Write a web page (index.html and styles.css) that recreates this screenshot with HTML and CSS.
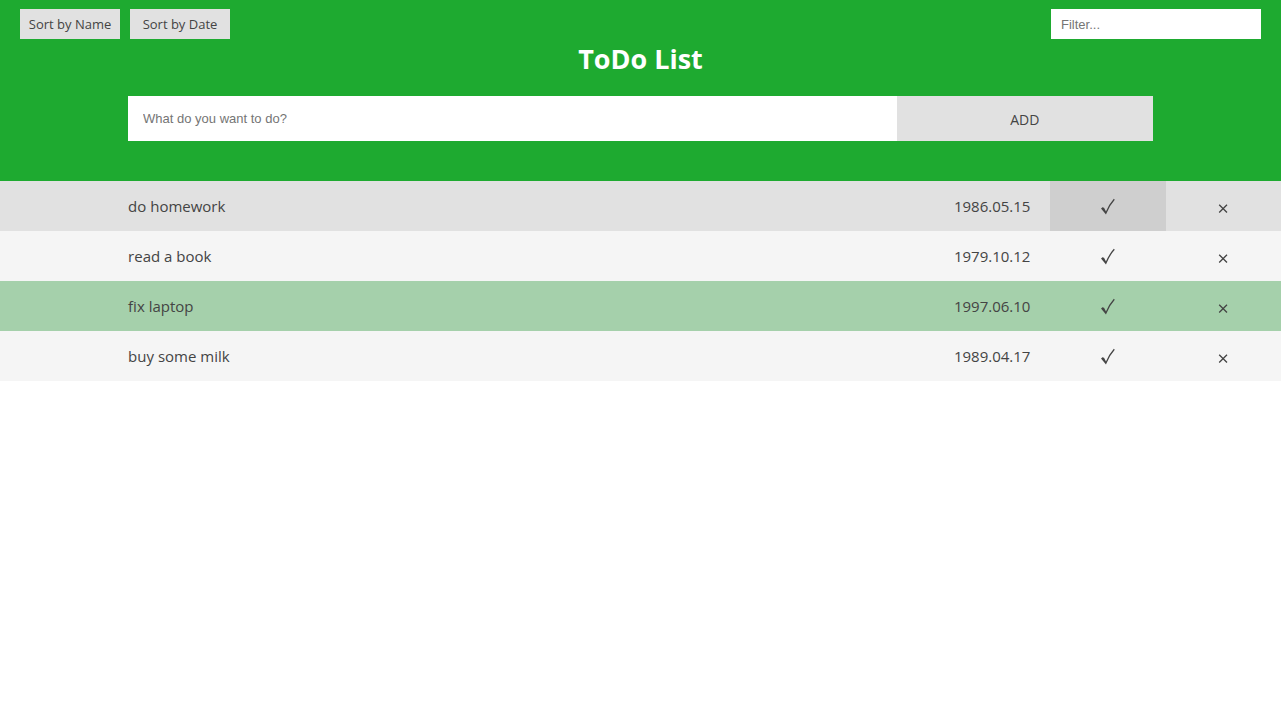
FILE: index.html
```html
<!DOCTYPE html>
<html lang="en">
<head>
<meta charset="utf-8">
<meta name="viewport" content="width=device-width, initial-scale=1">
<title>ToDo List</title>
<link rel="stylesheet" href="styles.css">
</head>
<body>
<header class="header">
  <div class="toolbar">
    <div class="sorting">
      <button type="button" class="sort-button">Sort by Name</button>
      <button type="button" class="sort-button">Sort by Date</button>
    </div>
    <input class="filter" type="text" placeholder="Filter..." aria-label="Filter">
  </div>
  <h1 class="title">ToDo List</h1>
  <form class="add-form">
    <input class="new-task" type="text" placeholder="What do you want to do?" aria-label="New task">
    <button type="button" class="add-button">ADD</button>
  </form>
</header>
<main>
  <ul class="tasks">
    <li class="task hovered">
      <span class="name">do homework</span><time class="date">1986.05.15</time>
      <button type="button" class="action active" aria-label="Complete"><svg class="icon" viewBox="0 0 16 18"><path d="M1.5 10.2 L5.8 15.2 Q9.3 6.8 14.3 1.3 M2 10 L3.6 10.4 L5.8 14.5"/></svg></button>
      <button type="button" class="action" aria-label="Delete"><svg class="icon" viewBox="0 0 16 18"><path d="M4.2 6.7 L12 14.5 M12 6.7 L4.2 14.5"/></svg></button>
    </li>
    <li class="task">
      <span class="name">read a book</span><time class="date">1979.10.12</time>
      <button type="button" class="action" aria-label="Complete"><svg class="icon" viewBox="0 0 16 18"><path d="M1.5 10.2 L5.8 15.2 Q9.3 6.8 14.3 1.3 M2 10 L3.6 10.4 L5.8 14.5"/></svg></button>
      <button type="button" class="action" aria-label="Delete"><svg class="icon" viewBox="0 0 16 18"><path d="M4.2 6.7 L12 14.5 M12 6.7 L4.2 14.5"/></svg></button>
    </li>
    <li class="task done">
      <span class="name">fix laptop</span><time class="date">1997.06.10</time>
      <button type="button" class="action" aria-label="Complete"><svg class="icon" viewBox="0 0 16 18"><path d="M1.5 10.2 L5.8 15.2 Q9.3 6.8 14.3 1.3 M2 10 L3.6 10.4 L5.8 14.5"/></svg></button>
      <button type="button" class="action" aria-label="Delete"><svg class="icon" viewBox="0 0 16 18"><path d="M4.2 6.7 L12 14.5 M12 6.7 L4.2 14.5"/></svg></button>
    </li>
    <li class="task">
      <span class="name">buy some milk</span><time class="date">1989.04.17</time>
      <button type="button" class="action" aria-label="Complete"><svg class="icon" viewBox="0 0 16 18"><path d="M1.5 10.2 L5.8 15.2 Q9.3 6.8 14.3 1.3 M2 10 L3.6 10.4 L5.8 14.5"/></svg></button>
      <button type="button" class="action" aria-label="Delete"><svg class="icon" viewBox="0 0 16 18"><path d="M4.2 6.7 L12 14.5 M12 6.7 L4.2 14.5"/></svg></button>
    </li>
  </ul>
</main>
</body>
</html>
```
FILE: styles.css
```css
* {
  box-sizing: border-box;
}

body {
  margin: 0;
  background: #fff;
  color: #444;
  font-family: "Open Sans", "Noto Sans", sans-serif;
  font-size: 15px;
}

button,
input {
  margin: 0;
  border: 0;
  border-radius: 0;
  color: inherit;
}

button {
  padding: 0;
  font: inherit;
  cursor: pointer;
}

input {
  background: #fff;
  font-family: "Liberation Sans", Arial, sans-serif;
  font-size: 13px;
}

input::placeholder {
  color: #757575;
}

.header {
  padding: 9px 0 40px;
  background: #1eaa30;
}

.toolbar {
  display: flex;
  justify-content: space-between;
  padding: 0 20px;
}

.sorting {
  display: flex;
  gap: 10px;
}

.sort-button {
  width: 100px;
  height: 30px;
  background: #e1e1e1;
  font-size: 13px;
  white-space: nowrap;
}

.filter {
  width: 210px;
  height: 30px;
  padding: 0 10px;
}

.title {
  margin: 0 0 17px;
  color: #fff;
  font-size: 27px;
  line-height: 40px;
  text-align: center;
}

.add-form {
  display: flex;
  width: 80%;
  margin: 0 auto;
}

.new-task {
  width: 75%;
  height: 45px;
  padding: 0 15px;
}

.add-button {
  width: 25%;
  padding-top: 2px;
  background: #e1e1e1;
  font-size: 14px;
}

.tasks {
  margin: 0;
  padding: 0;
  list-style: none;
}

.task {
  display: flex;
  align-items: center;
  height: 50px;
  padding-left: 10%;
  background: #f5f5f5;
}

.task.hovered {
  background: #e1e1e1;
}

.task.done {
  background: #a5d0ab;
}

.name {
  flex: 1;
}

.date {
  margin-right: 20px;
}

.action {
  display: flex;
  flex: 0 0 10%;
  align-items: center;
  justify-content: center;
  height: 100%;
  padding-top: 2px;
  background: transparent;
}

.action.active {
  background: #cfcfcf;
}

.icon {
  width: 16px;
  height: 18px;
  fill: none;
  stroke: #444;
  stroke-width: 1.3;
}
```
